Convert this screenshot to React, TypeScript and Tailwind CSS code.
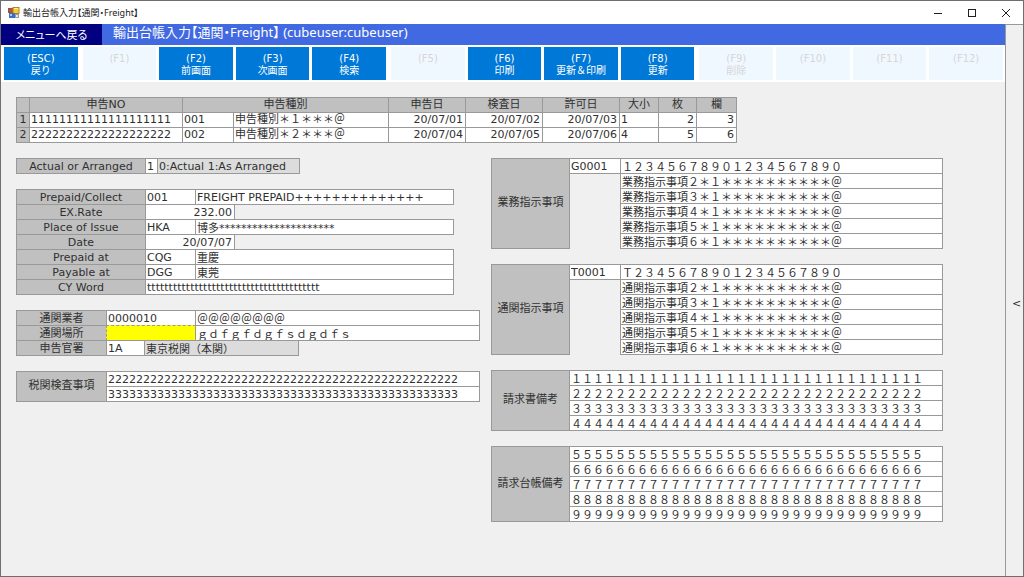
import { useId } from "react";
import clsx from "clsx";

const FN_KEYS = [
  { key: "ESC", label: "戻り" },
  { key: "F1", group: true },
  { key: "F2", label: "前画面" },
  { key: "F3", label: "次画面" },
  { key: "F4", label: "検索" },
  { key: "F5", group: true },
  { key: "F6", label: "印刷" },
  { key: "F7", label: "更新＆印刷" },
  { key: "F8", label: "更新" },
  { key: "F9", label: "削除", group: true, disabled: true },
  { key: "F10" },
  { key: "F11" },
  { key: "F12" },
];

const DECLARATIONS = [
  { no: "1".repeat(20), code: "001", kind: "申告種別＊１＊＊＊＠", dates: ["20/07/01", "20/07/02", "20/07/03"], size: "1", sheets: "2", columns: "3" },
  { no: "2".repeat(20), code: "002", kind: "申告種別＊２＊＊＊＠", dates: ["20/07/04", "20/07/05", "20/07/06"], size: "4", sheets: "5", columns: "6" },
];

const noteLines = (name: string) => ["２", "３", "４", "５", "６"].map((n) => `${name}${n}＊１＊＊＊＊＊＊＊＊＊＊＠`);
const filled = (digits: string[]) => digits.map((d) => d.repeat(32));

function AppIcon() {
  return (
    <svg className="h-3 w-3" viewBox="0 0 12 12">
      <rect x="0.5" y="1.5" width="5" height="4" fill="#c9501c" stroke="#8a5a42" />
      <rect x="5" y="0.5" width="6" height="6" fill="#f7cb32" stroke="#a98432" />
      <rect x="6" y="1" width="4" height="1" fill="#fff0a8" />
      <rect x="1" y="6" width="6" height="5" fill="#3a6fc4" />
      <rect x="2" y="7" width="2" height="2" fill="#a9c9f4" />
      <rect x="7.5" y="7.5" width="3" height="3" fill="#e8e8e8" stroke="#9a9a9a" />
    </svg>
  );
}

function TitleBar() {
  return (
    <div className="flex h-[23px] items-center bg-white pr-3 pl-[7px]">
      <AppIcon />
      <span className="ml-[3px] flex-1 font-['Noto_Sans','Noto_Sans_CJK_JP',sans-serif] text-[9px] leading-3 text-[#202020] [font-feature-settings:'palt']">
        輸出台帳入力【通関・Freight】
      </span>
      <div className="flex gap-6 text-[#202020]">
        <button type="button" aria-label="Minimize">
          <svg className="h-[10px] w-[10px]" viewBox="0 0 10 10" fill="none" stroke="currentColor">
            <path d="M1 5.5h8" />
          </svg>
        </button>
        <button type="button" aria-label="Maximize">
          <svg className="h-[10px] w-[10px]" viewBox="0 0 10 10" fill="none" stroke="currentColor">
            <rect x="1.5" y="1.5" width="7" height="7" />
          </svg>
        </button>
        <button type="button" aria-label="Close">
          <svg className="h-[10px] w-[10px]" viewBox="0 0 10 10" fill="none" stroke="currentColor">
            <path d="M1 1l8 8M9 1l-8 8" />
          </svg>
        </button>
      </div>
    </div>
  );
}

type FieldProps = {
  value?: string;
  label?: string;
  id?: string;
  readOnly?: boolean;
  className?: string;
};

// Boxes overlap their left neighbour and the row above by one pixel, so borders stay single.
function Field({ value = "", label, id, readOnly, className }: FieldProps) {
  return (
    <input
      id={id}
      aria-label={label}
      defaultValue={value}
      readOnly={readOnly}
      className={clsx(
        "-ml-px h-4 min-w-0 shrink-0 border border-[#999999] pr-[2px] pl-px leading-[14px] outline-none",
        readOnly ? "bg-[#dcdcdc]" : !className?.includes("bg-") && "bg-white",
        className,
      )}
    />
  );
}

type RowProps = {
  title: string;
  labelWidth: string;
  fields: FieldProps[];
};

function Row({ title, labelWidth, fields }: RowProps) {
  const id = useId();
  return (
    <div className="-mt-px flex first:mt-0">
      <label
        htmlFor={id}
        className={clsx("h-4 shrink-0 border border-[#999999] bg-[#c0c0c0] text-center leading-[15px]", labelWidth)}
      >
        {title}
      </label>
      {fields.map((f, i) => (
        <Field key={i} {...f} id={i === 0 ? id : undefined} label={i === 0 ? undefined : `${title} ${i + 1}`} />
      ))}
    </div>
  );
}

type NotesProps = {
  title: string;
  lines: string[];
  code?: string;
  labelWidth: string;
  lineWidth: string;
};

function Notes({ title, lines, code, labelWidth, lineWidth }: NotesProps) {
  const id = useId();
  return (
    <div className="flex">
      <label
        htmlFor={id}
        className={clsx("flex shrink-0 items-center justify-center border border-[#999999] bg-[#c0c0c0]", labelWidth)}
      >
        {title}
      </label>
      {code && <Field value={code} label={`${title} code`} className="w-[52px]" />}
      <div className="flex flex-col">
        {lines.map((line, i) => (
          <div key={i} className="-mt-px flex first:mt-0">
            <Field value={line} id={i === 0 ? id : undefined} label={i === 0 ? undefined : `${title} ${i + 1}`} className={lineWidth} />
          </div>
        ))}
      </div>
    </div>
  );
}

function DeclarationTable() {
  const cell = "h-[15px] border border-[#999999] bg-white p-0";
  const head = "h-[15px] border border-[#999999] bg-[#c0c0c0] p-0 text-center font-normal";
  const input = "block h-[14px] w-full pr-[2px] pl-px leading-[14px] outline-none";
  return (
    <table className="w-[721px] table-fixed border-collapse leading-[14px]">
      <colgroup>
        <col className="w-[13px]" />
        <col className="w-[153px]" />
        <col className="w-[51px]" />
        <col className="w-[155px]" />
        <col className="w-[77px]" />
        <col className="w-[77px]" />
        <col className="w-[77px]" />
        <col className="w-[39px]" />
        <col className="w-[38px]" />
        <col className="w-[40px]" />
      </colgroup>
      <thead>
        <tr>
          <th className={head} />
          <th className={head}>申告NO</th>
          <th className={head} colSpan={2}>申告種別</th>
          <th className={head}>申告日</th>
          <th className={head}>検査日</th>
          <th className={head}>許可日</th>
          <th className={head}>大小</th>
          <th className={head}>枚</th>
          <th className={head}>欄</th>
        </tr>
      </thead>
      <tbody>
        {DECLARATIONS.map((d, i) => (
          <tr key={d.no}>
            <th className={head}>{i + 1}</th>
            <td className={cell}><input aria-label="申告NO" className={input} defaultValue={d.no} /></td>
            <td className={cell}><input aria-label="申告種別コード" className={input} defaultValue={d.code} /></td>
            <td className={cell}><input aria-label="申告種別" className={input} defaultValue={d.kind} /></td>
            {d.dates.map((date) => (
              <td key={date} className={cell}>
                <input aria-label="日付" className={clsx(input, "text-right")} defaultValue={date} />
              </td>
            ))}
            <td className={cell}><input aria-label="大小" className={input} defaultValue={d.size} /></td>
            <td className={cell}><input aria-label="枚" className={clsx(input, "text-right")} defaultValue={d.sheets} /></td>
            <td className={cell}><input aria-label="欄" className={clsx(input, "text-right")} defaultValue={d.columns} /></td>
          </tr>
        ))}
      </tbody>
    </table>
  );
}

export default function App() {
  return (
    <div className="flex min-h-screen flex-col border border-[#6e6e6e] bg-[#f0f0f0] font-['DejaVu_Sans','Noto_Sans_CJK_JP',sans-serif] text-[11px] text-[#303030]">
      <TitleBar />
      <div className="flex flex-1">
        <div className="flex min-w-0 flex-1 flex-col">
          <header className="flex h-[21px] bg-[#4169e1] font-['Noto_Sans','Noto_Sans_CJK_JP',sans-serif] text-white [font-feature-settings:'palt']">
            <button type="button" className="w-[101px] shrink-0 bg-[#000080] text-[11px] leading-[21px]">
              メニューへ戻る
            </button>
            <h1 className="ml-[11px] text-[13px] leading-4">輸出台帳入力【通関・Freight】 (cubeuser:cubeuser)</h1>
          </header>

          <nav className="flex gap-[3px] bg-white py-[2px] pr-[2px] pl-[3px]">
            {FN_KEYS.map(({ key, label, group, disabled }) => {
              const off = disabled || !label;
              return (
                <button
                  key={key}
                  type="button"
                  disabled={off}
                  className={clsx(
                    "flex h-[33px] min-w-0 flex-1 flex-col items-center pt-[6px] text-[10px] leading-3",
                    off ? "bg-[#f0f8ff] text-[#d6d6d6]" : "bg-[#0078d7] text-white",
                    group && "ml-[2px]",
                  )}
                >
                  <span>({key})</span>
                  <span>{label}</span>
                </button>
              );
            })}
          </nav>

          <main className="flex flex-col gap-[15px] px-[15px] pt-[15px]">
            <DeclarationTable />
            <div className="flex gap-[11px]">
              <div className="flex w-[464px] shrink-0 flex-col gap-[15px]">
                <div>
                  <Row
                    title="Actual or Arranged"
                    labelWidth="w-[130px]"
                    fields={[
                      { value: "1", className: "w-[13px]" },
                      { value: "0:Actual 1:As Arranged", readOnly: true, className: "w-[143px]" },
                    ]}
                  />
                </div>
                <div>
                  <Row
                    title="Prepaid/Collect"
                    labelWidth="w-[130px]"
                    fields={[
                      { value: "001", className: "w-[51px]" },
                      { value: "FREIGHT PREPAID++++++++++++++", className: "w-[259px]" },
                    ]}
                  />
                  <Row title="EX.Rate" labelWidth="w-[130px]" fields={[{ value: "232.00", className: "w-[90px] text-right" }]} />
                  <Row
                    title="Place of Issue"
                    labelWidth="w-[130px]"
                    fields={[
                      { value: "HKA", className: "w-[51px]" },
                      { value: "博多" + "*".repeat(21), className: "w-[259px]" },
                    ]}
                  />
                  <Row title="Date" labelWidth="w-[130px]" fields={[{ value: "20/07/07", className: "w-[90px] text-right" }]} />
                  <Row
                    title="Prepaid at"
                    labelWidth="w-[130px]"
                    fields={[
                      { value: "CQG", className: "w-[51px]" },
                      { value: "重慶", className: "w-[259px]" },
                    ]}
                  />
                  <Row
                    title="Payable at"
                    labelWidth="w-[130px]"
                    fields={[
                      { value: "DGG", className: "w-[51px]" },
                      { value: "東莞", className: "w-[259px]" },
                    ]}
                  />
                  <Row title="CY Word" labelWidth="w-[130px]" fields={[{ value: "t".repeat(40), className: "w-[309px]" }]} />
                </div>
                <div>
                  <Row
                    title="通関業者"
                    labelWidth="w-[91px]"
                    fields={[
                      { value: "0000010", className: "w-[90px]" },
                      { value: "＠＠＠＠＠＠＠＠", className: "w-[285px]" },
                    ]}
                  />
                  <Row
                    title="通関場所"
                    labelWidth="w-[91px]"
                    fields={[
                      { className: "w-[90px] border-dashed bg-[#ffff00]" },
                      { value: "ｇｄｆｇｆｄｇｆｓｄｇｄｆｓ", className: "w-[285px]" },
                    ]}
                  />
                  <Row
                    title="申告官署"
                    labelWidth="w-[91px]"
                    fields={[
                      { value: "1A", className: "w-[39px]" },
                      { value: "東京税関（本関）", readOnly: true, className: "w-[155px]" },
                    ]}
                  />
                </div>
                <Notes title="税関検査事項" labelWidth="w-[91px]" lineWidth="w-[374px]" lines={["2".repeat(50), "3".repeat(50)]} />
              </div>

              <div className="flex flex-col gap-[15px]">
                <Notes
                  title="業務指示事項"
                  code="G0001"
                  labelWidth="w-[79px]"
                  lineWidth="w-[323px]"
                  lines={["１２３４５６７８９０１２３４５６７８９０", ...noteLines("業務指示事項")]}
                />
                <Notes
                  title="通関指示事項"
                  code="T0001"
                  labelWidth="w-[79px]"
                  lineWidth="w-[323px]"
                  lines={["Ｔ２３４５６７８９０１２３４５６７８９０", ...noteLines("通関指示事項")]}
                />
                <Notes title="請求書備考" labelWidth="w-[79px]" lineWidth="w-[374px]" lines={filled(["１", "２", "３", "４"])} />
                <Notes title="請求台帳備考" labelWidth="w-[79px]" lineWidth="w-[374px]" lines={filled(["５", "６", "７", "８", "９"])} />
              </div>
            </div>
          </main>
        </div>

        <button type="button" aria-label="Open side panel" className="w-[18px] shrink-0 border-t border-l border-[#999999] bg-[#f0f0f0] pt-2 pl-1 text-center">
          &lt;
        </button>
      </div>
    </div>
  );
}
